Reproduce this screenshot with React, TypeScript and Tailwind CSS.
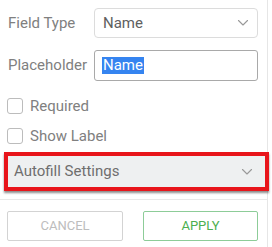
import React from "react";

const Chevron = () => (
  <svg width="12" height="8" viewBox="0 0 12 8" fill="none" className="text-[#999]">
    <path d="M1.5 1.5 L6 6 L10.5 1.5" stroke="currentColor" strokeWidth="1.1" strokeLinecap="round" strokeLinejoin="round" />
  </svg>
);

const Box = () => (
  <span className="block w-[16px] h-[16px] rounded-[3px] border border-[#bcbcbc] bg-white" />
);

export default function App() {
  return (
    <div
      className="w-[272px] h-[247px] bg-white overflow-hidden"
      style={{ fontFamily: "Roboto, 'Open Sans', Arial, sans-serif" }}
    >
      <div className="w-[268px] h-[247px] border-r border-[#e6e6e6] flex flex-col">
        <div className="flex items-center mt-[8px] h-[30px]">
          <span className="ml-[8px] w-[86px] text-[15px] text-[#808080]">Field Type</span>
          <div className="w-[164px] h-[30px] rounded-[4px] border border-[#dcdcdc] flex items-center justify-between pl-[8px] pr-[8px]">
            <span className="text-[15px] text-[#606060]">Name</span>
            <Chevron />
          </div>
        </div>
        <div className="flex items-center mt-[12px] h-[31px]">
          <span className="ml-[8px] w-[86px] text-[15px] text-[#808080]">Placeholder</span>
          <div className="w-[164px] h-[31px] rounded-[3px] border border-[#a9a9a9] flex items-center pl-[7px]">
            <span className="text-[15px] leading-[17px] bg-[#3584f0] text-white px-[1px]">Name</span>
          </div>
        </div>
        <div className="flex items-center gap-[7px] ml-[7px] mt-[17px] h-[16px]">
          <Box />
          <span className="text-[15px] text-[#808080]">Required</span>
        </div>
        <div className="flex items-center gap-[7px] ml-[7px] mt-[14px] h-[16px]">
          <Box />
          <span className="text-[15px] text-[#808080]">Show Label</span>
        </div>
        <div className="ml-[4px] mt-[8px] w-[265px] h-[39px] border-[4px] border-[#e8151b] bg-[#eef0f1] flex items-center justify-between pl-[6px] pr-[12px] shadow-[0_2px_2px_rgba(0,0,0,0.45)]">
          <span className="text-[15px] text-[#6e6e6e]">Autofill Settings</span>
          <Chevron />
        </div>
        <div className="mt-[8px] h-px bg-[#e8e8e8]" />
        <div className="flex mt-[11px]">
          <div className="ml-[7px] w-[116px] h-[30px] border border-[#d3d3d3] rounded-[2px] flex items-center justify-center text-[13px] text-[#bdbdbd]">
            CANCEL
          </div>
          <div className="ml-[20px] w-[115px] h-[30px] border border-[#8dcc98] rounded-[2px] flex items-center justify-center text-[13px] text-[#4caf50]">
            APPLY
          </div>
        </div>
      </div>
    </div>
  );
}
